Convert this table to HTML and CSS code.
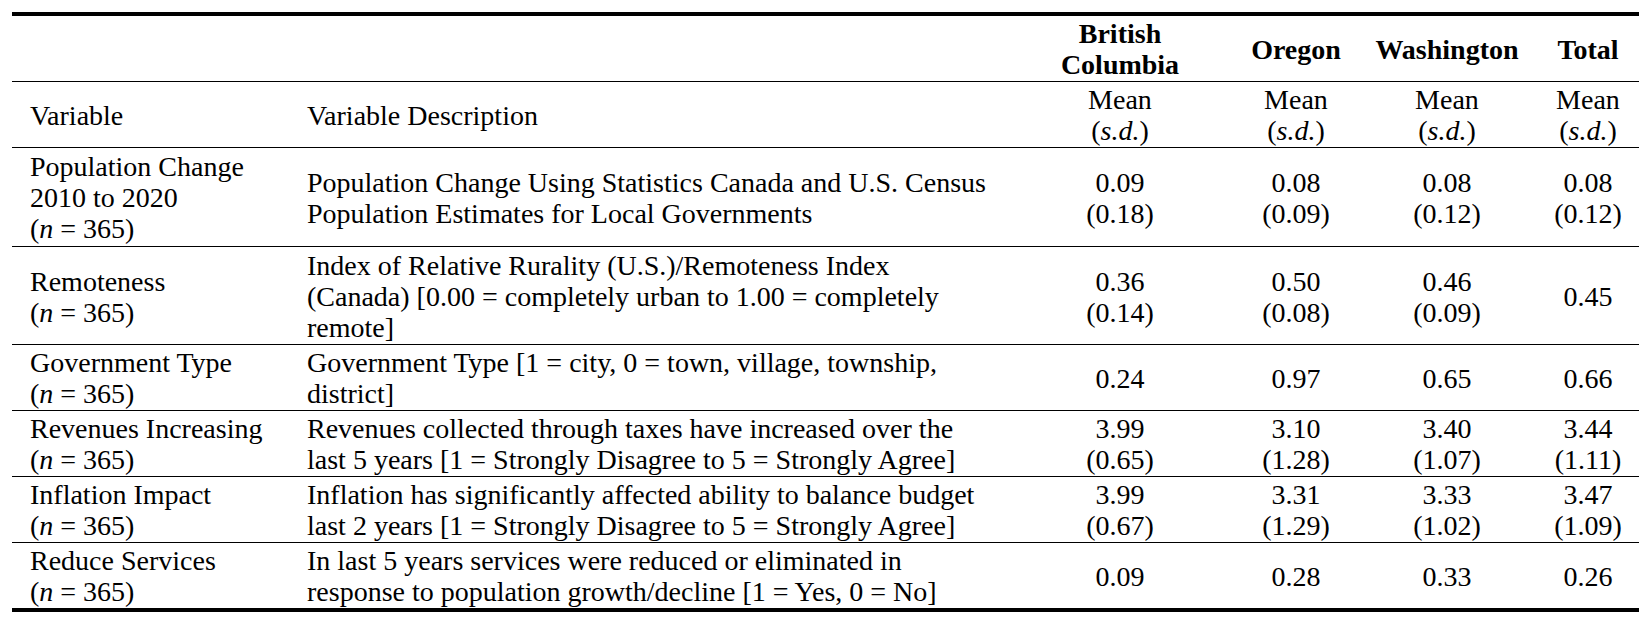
FILE: index.html
```html
<!DOCTYPE html>
<html>
<head>
<meta charset="utf-8">
<link rel="stylesheet" href="styles.css">
</head>
<body>
<table class="stats">
  <colgroup>
    <col class="c-var">
    <col class="c-desc">
    <col class="c-bc">
    <col class="c-or">
    <col class="c-wa">
    <col class="c-tot">
  </colgroup>
  <thead>
    <tr class="region-row">
      <th class="txt"></th>
      <th class="txt"></th>
      <th class="num">British<br>Columbia</th>
      <th class="num or">Oregon</th>
      <th class="num">Washington</th>
      <th class="num tot">Total</th>
    </tr>
    <tr class="stat-row">
      <td class="txt">Variable</td>
      <td class="txt">Variable Description</td>
      <td class="num">Mean<br>(<i>s.d.</i>)</td>
      <td class="num or">Mean<br>(<i>s.d.</i>)</td>
      <td class="num">Mean<br>(<i>s.d.</i>)</td>
      <td class="num tot">Mean<br>(<i>s.d.</i>)</td>
    </tr>
  </thead>
  <tbody>
    <tr class="tall">
      <td class="txt">Population Change<br>2010 to 2020<br>(<i>n</i> = 365)</td>
      <td class="txt">Population Change Using Statistics Canada and U.S. Census<br>Population Estimates for Local Governments</td>
      <td class="num">0.09<br>(0.18)</td>
      <td class="num or">0.08<br>(0.09)</td>
      <td class="num">0.08<br>(0.12)</td>
      <td class="num tot">0.08<br>(0.12)</td>
    </tr>
    <tr class="tall-b">
      <td class="txt">Remoteness<br>(<i>n</i> = 365)</td>
      <td class="txt">Index of Relative Rurality (U.S.)/Remoteness Index<br>(Canada) [0.00 = completely urban to 1.00 = completely<br>remote]</td>
      <td class="num">0.36<br>(0.14)</td>
      <td class="num or">0.50<br>(0.08)</td>
      <td class="num">0.46<br>(0.09)</td>
      <td class="num tot">0.45</td>
    </tr>
    <tr>
      <td class="txt">Government Type<br>(<i>n</i> = 365)</td>
      <td class="txt">Government Type [1 = city, 0 = town, village, township,<br>district]</td>
      <td class="num">0.24</td>
      <td class="num or">0.97</td>
      <td class="num">0.65</td>
      <td class="num tot">0.66</td>
    </tr>
    <tr>
      <td class="txt">Revenues Increasing<br>(<i>n</i> = 365)</td>
      <td class="txt">Revenues collected through taxes have increased over the<br>last 5 years [1 = Strongly Disagree to 5 = Strongly Agree]</td>
      <td class="num">3.99<br>(0.65)</td>
      <td class="num or">3.10<br>(1.28)</td>
      <td class="num">3.40<br>(1.07)</td>
      <td class="num tot">3.44<br>(1.11)</td>
    </tr>
    <tr>
      <td class="txt">Inflation Impact<br>(<i>n</i> = 365)</td>
      <td class="txt">Inflation has significantly affected ability to balance budget<br>last 2 years [1 = Strongly Disagree to 5 = Strongly Agree]</td>
      <td class="num">3.99<br>(0.67)</td>
      <td class="num or">3.31<br>(1.29)</td>
      <td class="num">3.33<br>(1.02)</td>
      <td class="num tot">3.47<br>(1.09)</td>
    </tr>
    <tr class="last">
      <td class="txt">Reduce Services<br>(<i>n</i> = 365)</td>
      <td class="txt">In last 5 years services were reduced or eliminated in<br>response to population growth/decline [1 = Yes, 0 = No]</td>
      <td class="num">0.09</td>
      <td class="num or">0.28</td>
      <td class="num">0.33</td>
      <td class="num tot">0.26</td>
    </tr>
  </tbody>
</table>
</body>
</html>
```
FILE: styles.css
```css
html, body {
  margin: 0;
  padding: 0;
  background: #ffffff;
}

body {
  padding: 12px 0 0 12px;
  font-family: "Liberation Serif", "Times New Roman", serif;
  font-size: 28px;
  line-height: 31px;
  color: #000;
}

.stats {
  width: 1627px;
  table-layout: fixed;
  border-collapse: separate;
  border-spacing: 0;
  border-top: 4px solid #000;
}

.c-var { width: 277px; }
.c-desc { width: 743px; }
.c-bc { width: 176px; }
.c-or { width: 164px; }
.c-wa { width: 150px; }
.c-tot { width: 117px; }

.stats th,
.stats td {
  padding: 2px 0 1px 0;
  vertical-align: middle;
  border-bottom: 1px solid #000;
  white-space: nowrap;
}

.stats th {
  font-weight: bold;
}

.stats .txt {
  text-align: left;
  padding-left: 18px;
}

.stats .num {
  text-align: center;
}

.stats .or {
  padding-left: 12px;
}

.stats .tot {
  padding-left: 15px;
}

.stats tr.tall td {
  padding-top: 3px;
  padding-bottom: 2px;
}

.stats tr.tall-b td {
  padding-top: 3px;
  padding-bottom: 1px;
}

.stats tr.last td {
  border-bottom: 4px solid #000;
}

i {
  font-style: italic;
}
```
